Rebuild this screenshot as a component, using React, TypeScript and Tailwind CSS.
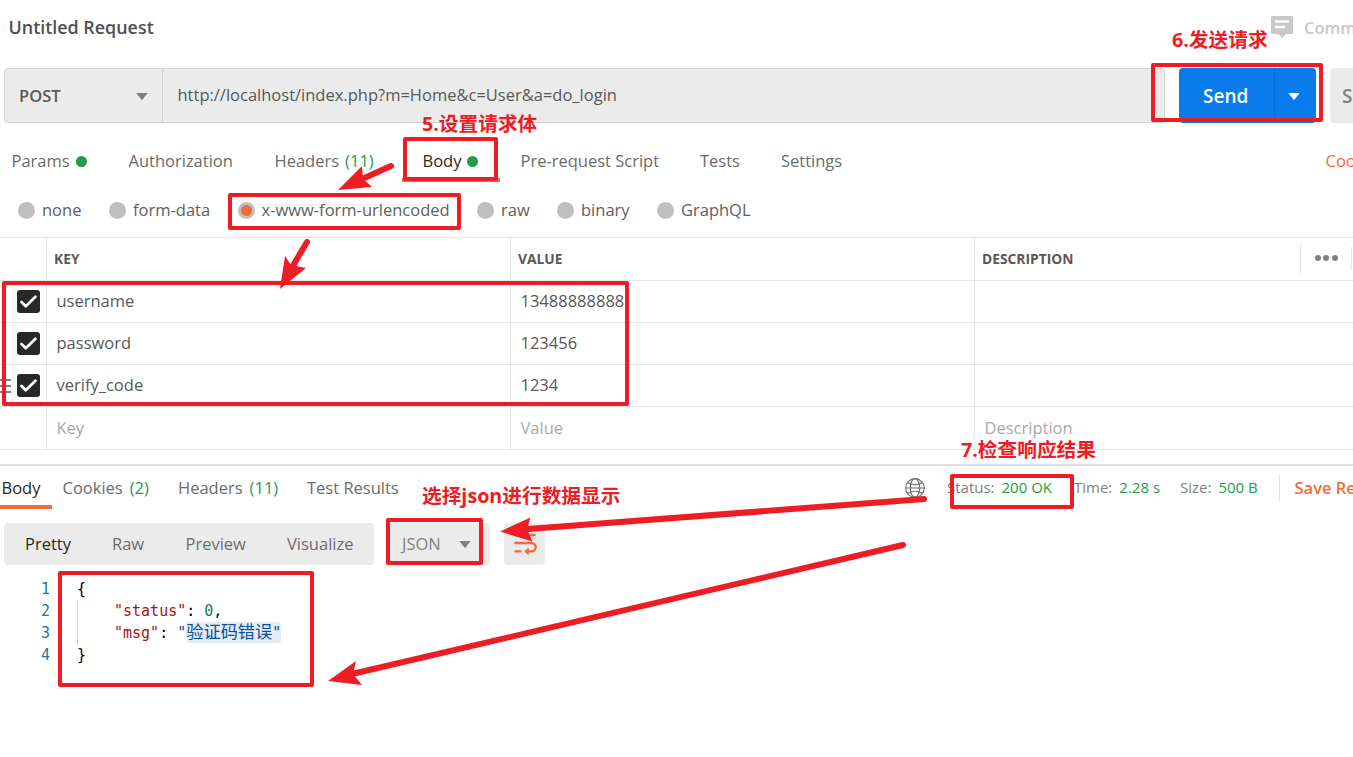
import type { ReactNode } from "react";
import clsx from "clsx";

const rows = [
  { key: "username", value: "13488888888" },
  { key: "password", value: "123456" },
  { key: "verify_code", value: "1234", drag: true },
];

const cn = "font-['Open_Sans','Noto_Sans_CJK_SC',sans-serif]";

function Dot() {
  return <span className="mt-px size-[11px] shrink-0 rounded-full bg-[#249c47]" />;
}

function Caret({ className }: { className?: string }) {
  return (
    <svg width="12" height="7" viewBox="0 0 12 7" className={clsx("shrink-0", className)}>
      <path d="M0.3 0h11.4L6.6 6.6q-.6.6-1.2 0z" fill="currentColor" />
    </svg>
  );
}

function Radio({ label, checked, className }: { label: string; checked?: boolean; className: string }) {
  return (
    <label className={clsx("flex shrink-0 items-center text-[#606060]", className)}>
      <span className="flex size-[17px] shrink-0 items-center justify-center rounded-full bg-[#bfbfbf]">
        {checked && <span className="size-[11px] rounded-full bg-[#f26b3a]" />}
      </span>
      <span className="pl-[7px]">{label}</span>
    </label>
  );
}

function Checkbox() {
  return (
    <span className="flex size-[23px] items-center justify-center rounded-[3px] bg-[#282828]">
      <svg width="17" height="13" viewBox="0 0 17 13" fill="none">
        <path d="M1.5 7l4.3 4.2L15.4 1.8" stroke="white" strokeWidth="2.7" strokeLinecap="round" strokeLinejoin="round" />
      </svg>
    </span>
  );
}

function Tab({ children, active, className }: { children: ReactNode; active?: boolean; className: string }) {
  return (
    <div className={clsx("flex shrink-0 items-center gap-[6px]", active ? "text-[#282828]" : "text-[#6b6b6b]", className)}>
      {children}
    </div>
  );
}

function Stat({ label, value, className }: { label: string; value: string; className: string }) {
  return (
    <div className={clsx("flex shrink-0 gap-[7px] pb-[2px] text-[15px] text-[#808080]", className)}>
      {label} <span className="text-[#249c47]">{value}</span>
    </div>
  );
}

function Box({ className }: { className: string }) {
  return <div className={clsx("absolute rounded-[2px] border-4 border-[#ee1c25]", className)} />;
}

function Note({ children, className }: { children: ReactNode; className: string }) {
  return (
    <div className={clsx("absolute font-['Open_Sans','Noto_Sans_CJK_SC',sans-serif] text-[19.7px] leading-7 font-bold text-[#ee1c25]", className)}>
      {children}
    </div>
  );
}

function Annotations() {
  return (
    <div className="pointer-events-none absolute inset-0">
      <Box className="top-[63px] left-[1151px] h-[59px] w-[172px]" />
      <Box className="top-[137px] left-[403px] h-[44px] w-[95px]" />
      <Box className="top-[193px] left-[228px] h-[37px] w-[233px]" />
      <Box className="top-[281px] left-[2px] h-[125px] w-[627px]" />
      <Box className="top-[474px] left-[950px] h-[35px] w-[124px]" />
      <Box className="top-[518px] left-[386px] h-[47px] w-[97px]" />
      <Box className="top-[571px] left-[58px] h-[116px] w-[256px]" />

      <svg width="1353" height="757" className="absolute inset-0" stroke="#ee1c25" fill="#ee1c25" strokeLinecap="round">
        <g strokeWidth="6">
          <path d="M391 166L362 179" />
          <path d="M307 242L291 269" />
          <path d="M924 499L528 529" />
          <path d="M903 545L352 674" />
        </g>
        <g stroke="none">
          <path d="M338 190L362 166L363 179L372 187Z" />
          <path d="M280 289L285 256L291 265L306 268Z" />
          <path d="M500 531.5L530.5 517.5L527 529.5L532.500 541.500Z" />
          <path d="M328 681L356 661L353 674L362 685Z" />
        </g>
      </svg>

      <Note className="top-[110px] left-[422px]">5.设置请求体</Note>
      <Note className="top-[26px] left-[1172px]">6.发送请求</Note>
      <Note className="top-[436px] left-[961px]">7.检查响应结果</Note>
      <Note className="top-[482px] left-[422px]">选择json进行数据显示</Note>
    </div>
  );
}

export default function App() {
  return (
    <div className={clsx("relative h-[757px] w-[1353px] overflow-hidden bg-white text-[16.5px] leading-6 whitespace-nowrap text-[#585858]", cn)}>
      {/* Title */}
      <div className="flex h-[68px] items-start justify-between pl-[8.5px]">
        <h1 className="pt-[15px] text-[17.9px] font-semibold text-[#505050]">Untitled Request</h1>
        <div className="flex w-[82px] shrink-0 pt-[16px] font-semibold text-[#c8c8c8]">
          <svg width="22" height="22" viewBox="0 0 22 22" className="shrink-0">
            <path d="M1.500 0h19q1.500 0 1.500 1.500v15q0 1.500-1.500 1.500h-5.500l-4 4-4-4H1.500Q0 18 0 16.500v-15Q0 0 1.500 0z" fill="#c8c8c8" />
            <path d="M5 5.500h12M5 11h8" stroke="white" strokeWidth="2.500" strokeLinecap="round" />
          </svg>
          <span className="pl-[11px]">Comments</span>
        </div>
      </div>

      {/* Request url */}
      <div className="flex h-[55px] pl-1">
        <div className="flex w-[1161px] shrink-0 rounded border border-[#d3d3d3] bg-[#ebebeb]">
          <div className="flex w-[158px] shrink-0 items-center justify-between border-r border-[#d3d3d3] pr-[14px] pl-[14px] font-semibold">
            POST
            <Caret className="mt-px text-[#808080]" />
          </div>
          <div className="flex items-center pb-[2px] pl-[14.5px]">http://localhost/index.php?m=Home&amp;c=User&amp;a=do_login</div>
        </div>
        <div className="ml-[14px] flex w-[137px] shrink-0 overflow-hidden rounded bg-[#097bed] text-white">
          <div className="flex w-[96px] items-center border-r border-[#0670da] pl-[24px] text-[19px] font-semibold">Send</div>
          <div className="flex w-[41px] items-center pt-px pl-[13px]"><Caret /></div>
        </div>
        <div className="ml-[14px] flex w-[90px] shrink-0 items-center rounded bg-[#ebebeb] pl-[12px] text-[19px] font-semibold text-[#808080]">Save</div>
      </div>

      {/* Request tabs */}
      <div className="flex h-[60px] pl-[11.5px]">
        <Tab className="h-[76px] w-[117px]">Params <Dot /></Tab>
        <Tab className="h-[76px] w-[146px]">Authorization</Tab>
        <Tab className="h-[76px] w-[127.5px]">Headers <span className="text-[#249c47]">(11)</span></Tab>
        <Tab active className="h-[59px] w-[98px] border-b-4 border-[#f26b3a] pt-[21px] pl-[20.5px]">Body <Dot /></Tab>
        <Tab className="h-[76px] w-[200px] pl-[20.5px]">Pre-request Script</Tab>
        <Tab className="h-[76px] w-[81px]">Tests</Tab>
        <Tab className="h-[76px] w-[544.5px]">Settings</Tab>
        <Tab className="h-[76px]"><span className="text-[#f26b3a]">Cookies</span></Tab>
      </div>

      {/* Body type */}
      <div className="flex h-[54px] items-center pl-[18px]">
        <Radio label="none" className="w-[91px]" />
        <Radio label="form-data" className="w-[128.5px]" />
        <Radio label="x-www-form-urlencoded" checked className="w-[239.5px]" />
        <Radio label="raw" className="w-[80px]" />
        <Radio label="binary" className="w-[100px]" />
        <Radio label="GraphQL" className="w-[120px]" />
      </div>

      {/* Form data */}
      <div className="h-[227px] w-full border-t border-[#e6e6e6]">
        <div className="flex h-[43px] border-b border-[#e6e6e6] text-[13.8px] font-bold">
          <div className="w-[47px] shrink-0 border-r border-[#e6e6e6]" />
          <div className="flex w-[464px] shrink-0 items-center border-r border-[#e6e6e6] pl-[7px]">KEY</div>
          <div className="flex w-[464px] shrink-0 items-center border-r border-[#e6e6e6] pl-[7px]">VALUE</div>
          <div className="flex w-[325px] shrink-0 items-center pl-[7px]">DESCRIPTION</div>
          <div className="mt-[6px] h-[30px] w-px shrink-0 bg-[#e6e6e6]" />
          <div className="flex w-[50px] shrink-0 items-center justify-center gap-[2.500px] pb-[2px]">
            <span className="size-[6px] rounded-full bg-[#808080]" />
            <span className="size-[6px] rounded-full bg-[#808080]" />
            <span className="size-[6px] rounded-full bg-[#808080]" />
          </div>
          <div className="mt-[9px] h-[23px] w-px shrink-0 bg-[#e6e6e6]" />
        </div>
        {rows.map((row) => (
          <div key={row.key} className="flex h-[42px] border-b border-[#e6e6e6]">
            <div className="flex w-[47px] shrink-0 items-center border-r border-[#e6e6e6]">
              <div className="flex w-[17px] flex-col gap-[4px]">
                {row.drag && [0, 1, 2].map((i) => <span key={i} className="h-[2px] w-[11px] bg-[#808080]" />)}
              </div>
              <Checkbox />
            </div>
            <div className="flex w-[464px] shrink-0 items-center border-r border-[#e6e6e6] pb-[2px] pl-[9.5px]">{row.key}</div>
            <div className="flex w-[464px] shrink-0 items-center border-r border-[#e6e6e6] pb-[2px] pl-[9.5px]">{row.value}</div>
          </div>
        ))}
        <div className="flex h-[43px] border-b border-[#e6e6e6] text-[#a9a9a9]">
          <div className="w-[47px] shrink-0 border-r border-[#e6e6e6]" />
          <div className="flex w-[464px] shrink-0 items-center border-r border-[#e6e6e6] pl-[9.5px]">Key</div>
          <div className="flex w-[464px] shrink-0 items-center border-r border-[#e6e6e6] pl-[9.5px]">Value</div>
          <div className="flex items-center pl-[9.5px]">Description</div>
        </div>
      </div>

      {/* Response tabs */}
      <div className="flex h-[59px] border-t-2 border-[#e0e0e0]">
        <Tab active className="h-[43px] w-[52px] border-b-4 border-[#f26b3a] pt-[4px] pl-[1.5px]">Body</Tab>
        <Tab className="h-[44px] w-[116px] pl-[10.5px]">Cookies <span className="pl-px text-[#249c47]">(2)</span></Tab>
        <Tab className="h-[44px] w-[139px] pl-[10px]">Headers <span className="pl-px text-[#249c47]">(11)</span></Tab>
        <Tab className="h-[44px] w-[598px]">Test Results</Tab>
        <div className="flex h-[44px] items-center">
          <svg width="20" height="20" viewBox="0 0 20 20" fill="none" stroke="#707070" strokeWidth="1.2" className="mr-[22px] shrink-0">
            <circle cx="10" cy="10" r="9.300" />
            <ellipse cx="10" cy="10" rx="4.800" ry="9.300" />
            <path d="M2.500 4.500Q10 9 17.500 4.500M0.700 10h18.600M2.500 15.500Q10 11 17.500 15.500" />
          </svg>
          <Stat label="Status:" value="200 OK" className="w-[127px]" />
          <Stat label="Time:" value="2.28 s" className="w-[106px]" />
          <Stat label="Size:" value="500 B" className="w-[99px]" />
          <div className="h-[26px] w-px shrink-0 bg-[#e0e0e0]" />
          <span className="pl-[14.5px] font-semibold text-[#f26b3a]">Save Response</span>
        </div>
      </div>

      {/* View mode */}
      <div className="flex h-[42px] pl-1 text-[#6b6b6b]">
        <div className="flex w-[370px] shrink-0 items-center rounded bg-[#ebebeb] pl-[21px]">
          <span className="w-[87px] text-[#282828]">Pretty</span>
          <span className="w-[73.5px]">Raw</span>
          <span className="w-[101.5px]">Preview</span>
          <span>Visualize</span>
        </div>
        <div className="ml-[14px] flex w-[102px] shrink-0 items-center justify-between rounded bg-[#ebebeb] pr-[19px] pl-[14px] text-[#808080]">
          JSON <Caret className="mt-px" />
        </div>
        <div className="ml-[14px] flex w-[41px] shrink-0 items-center justify-center rounded bg-[#ebebeb]">
          <svg width="24" height="24" viewBox="0 0 24 24" fill="none" stroke="#f26b3a" strokeWidth="2.400" strokeLinecap="round">
            <path d="M2.500 3h19M2.500 11h16a4.200 4.200 0 010 8.400H15M2.500 19.400h5" />
            <path d="M15 16.500l-3.200 2.900 3.200 2.900z" fill="#f26b3a" strokeWidth="1" />
          </svg>
        </div>
      </div>

      {/* Response body */}
      <div className="flex pt-[13px] font-['DejaVu_Sans_Mono','Noto_Sans_CJK_SC',monospace] text-[15px] leading-[22px]">
        <div className="w-[50px] shrink-0 text-right text-[#237893]">
          <div>1</div>
          <div>2</div>
          <div>3</div>
          <div>4</div>
        </div>
        <div className="pl-[27px] text-black">
          <div>{"{"}</div>
          <div className="border-l border-[#d3d3d3] pl-[36px]">
            <div><span className="text-[#a31515]">"status"</span>: <span className="text-[#098658]">0</span>,</div>
            <div>
              <span className="text-[#a31515]">"msg"</span>: <span className="text-[#0451a5]">"<span className="inline-block h-[21px] rounded-[3px] bg-[#e5ebf3] align-top leading-[20px]"><span className="text-[17.2px]">验证码错误</span>"</span></span>
            </div>
          </div>
          <div>{"}"}</div>
        </div>
      </div>

      <Annotations />
    </div>
  );
}
